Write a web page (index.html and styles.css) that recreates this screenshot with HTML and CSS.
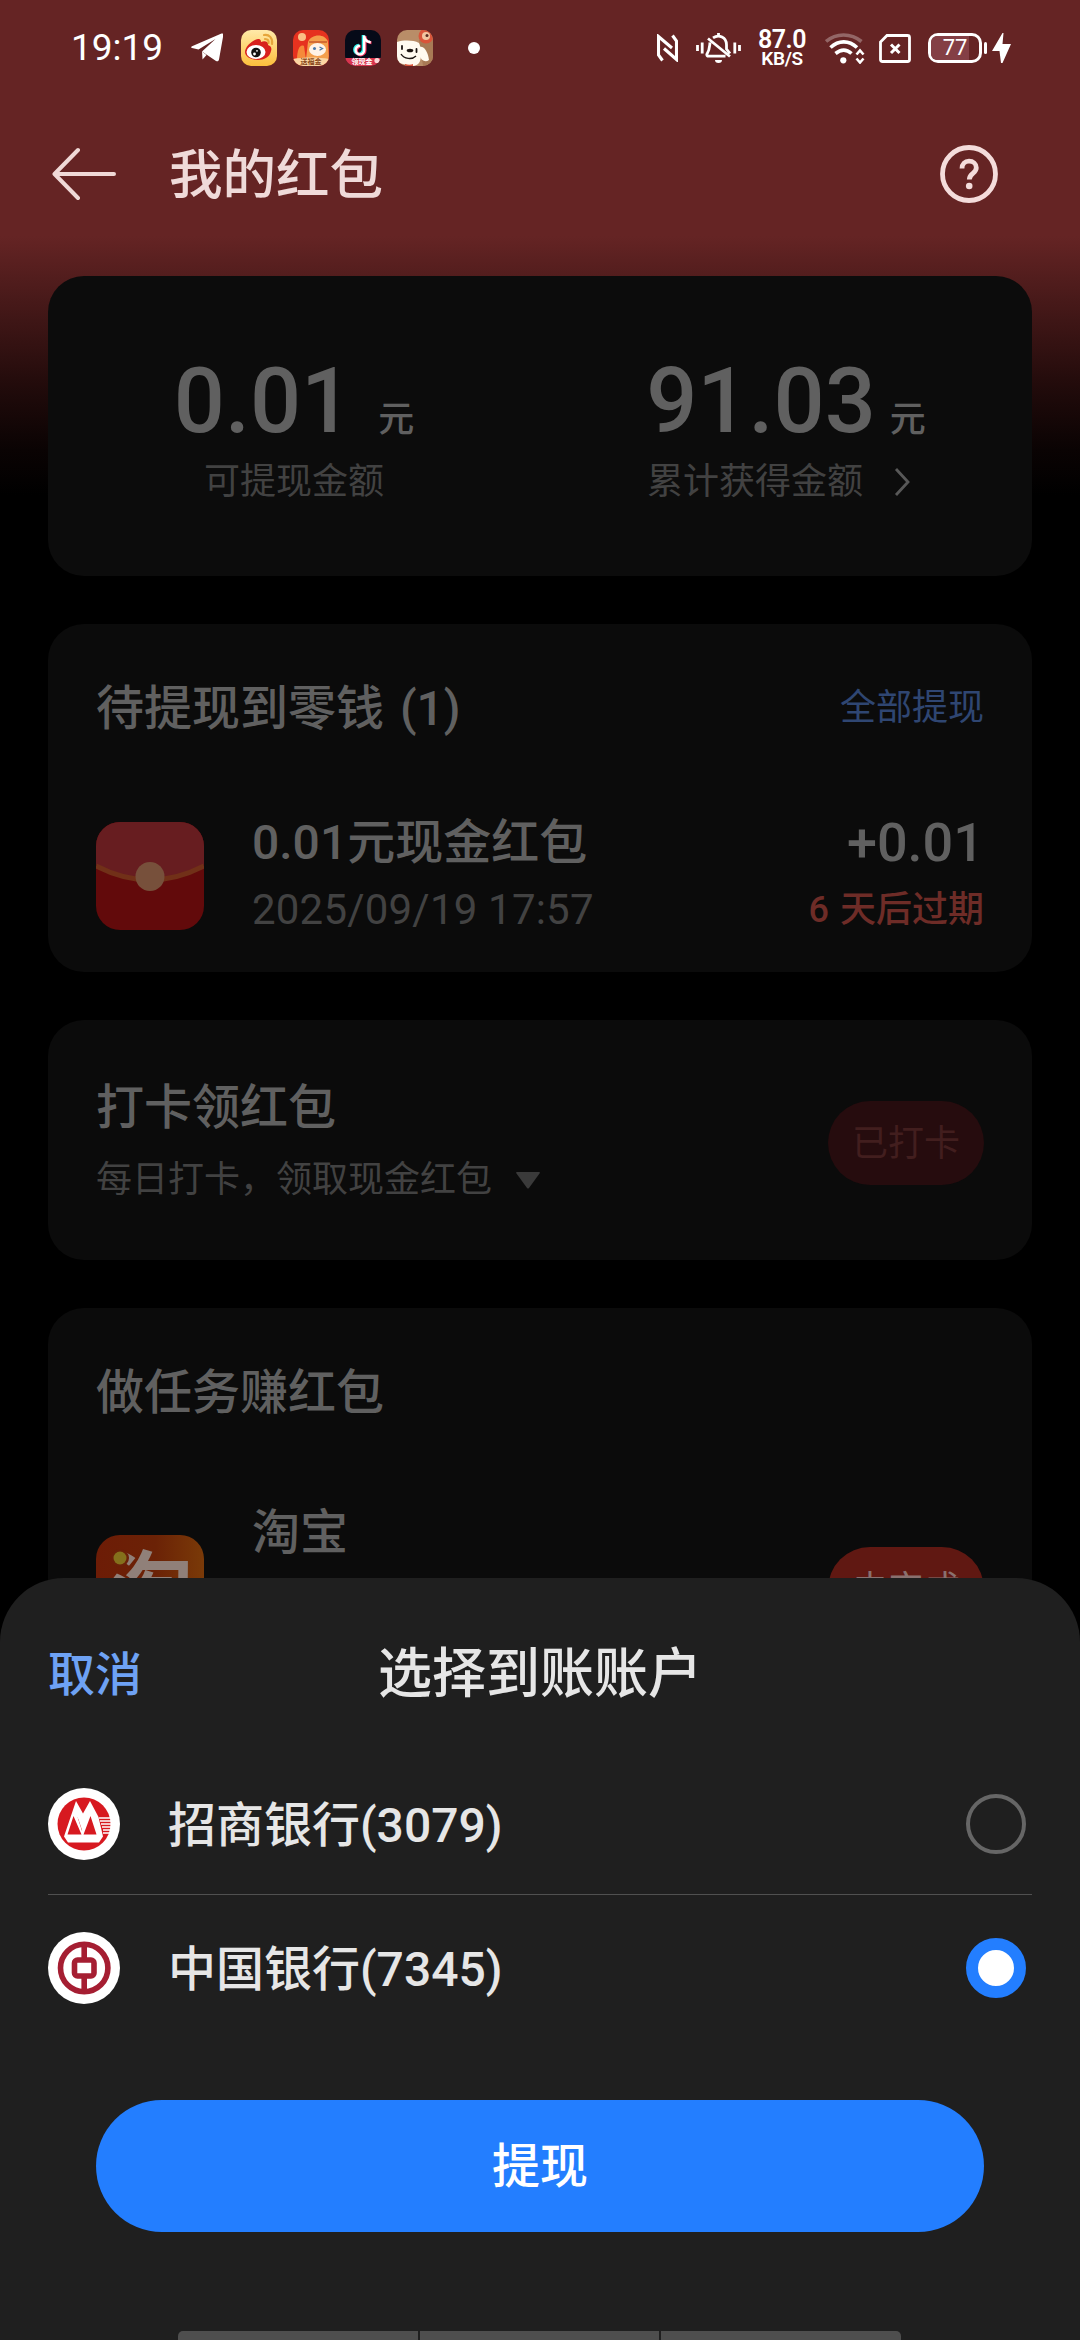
FILE: index.html
```html
<!DOCTYPE html>
<html lang="zh-CN">
<head>
<meta charset="utf-8">
<title>我的红包</title>
<link rel="stylesheet" href="styles.css">
</head>
<body>
<div class="screen">
  <div class="status">
    <span class="status-time">19:19</span>
    <svg class="tg" width="32" height="30" viewBox="0 0 32 30"><path d="M1 13.2 30.5.6c1.2-.5 2 .2 1.8 1.6L28 26.600c-.3 1.600-1.600 2.300-3 1.300L11 18.500 24.500 6 7.500 16.500 1 14.900c-1.100-.3-1.100-1.200 0-1.700Z" fill="#fff"/><path d="M11 18.500 15.500 22l-4 4.500Z" fill="#fff"/></svg>
    <div class="apps">
      <svg width="36" height="36" viewBox="0 0 36 36">
        <defs><linearGradient id="wb" x1="0" y1="0" x2="0" y2="1"><stop offset="0" stop-color="#ffe9a8"/><stop offset="1" stop-color="#fdbf3c"/></linearGradient></defs>
        <rect width="36" height="36" rx="10" fill="url(#wb)"/>
        <path d="M4 22c0-5 7-12 13-13 3 0 3 2 3 3 4-2 8 0 7 3 3 1 4 3 3 6-1 6-7 9-13 9S4 27 4 22Z" fill="#d8201d"/>
        <ellipse cx="15" cy="22" rx="9.500" ry="7" fill="#fff"/><circle cx="15" cy="22.500" r="4.800" fill="#111"/><circle cx="13.500" cy="24" r="1.400" fill="#fff"/><circle cx="16" cy="20.800" r=".9" fill="#fff"/>
        <path d="M23 5c5-1 9 3 8 9M24 9c3 0 4 2 3.500 4" fill="none" stroke="#e6a53a" stroke-width="2.200" stroke-linecap="round"/>
      </svg>
      <svg width="36" height="36" viewBox="0 0 36 36">
        <defs><clipPath id="rc"><rect width="36" height="36" rx="10"/></clipPath></defs>
        <g clip-path="url(#rc)">
          <rect width="36" height="36" fill="#e6321f"/>
          <circle cx="9" cy="7" r="4" fill="#fbbf86"/>
          <path d="M4 30c0-11 3-16 7-14l2 14Z" fill="#f58a3a"/>
          <path d="M15 12c3-8 17-9 20 0l1 17H13Z" fill="#f4a04c"/>
          <path d="M16 12h18" stroke="#c95a2b" stroke-width="1.500"/>
          <ellipse cx="24.500" cy="19.500" rx="8.500" ry="6.500" fill="#fff3e6"/>
          <circle cx="21.500" cy="18.500" r="1.500" fill="#4b79a8"/><path d="m26.500 17 3 1.500-3 1.800" fill="none" stroke="#4b79a8" stroke-width="1.300"/>
          <path d="M0 29c10-2 26-2 36 0v7H0Z" fill="#fbd6a3"/>
          <text x="18" y="34" class="micro micro-brown">送福金</text>
        </g>
      </svg>
      <svg width="36" height="36" viewBox="0 0 36 36">
        <g clip-path="url(#rc)">
          <rect width="36" height="36" fill="#060a18"/>
          <g fill="none" stroke-width="3"><path d="M18.200 5v14.500a4.300 4.300 0 1 1-4.300-4.200M18.200 6c.8 3.500 3 5.500 6.500 5.800" stroke="#2ff0ea"/><path d="M20 6v14.500a4.300 4.300 0 1 1-4.300-4.200M20 7c.8 3.500 3 5.500 6.500 5.800" stroke="#f5345f"/><path d="M19.200 5.500V20a4.300 4.300 0 1 1-4.300-4.200M19.200 6.500c.8 3.500 3 5.500 6.500 5.800" stroke="#fff" stroke-width="2.400"/></g>
          <path d="M0 28h36v3l-6 5H0Z" fill="#d8354e"/>
          <text x="17" y="34" class="micro">领现金</text>
          <circle cx="32" cy="30.500" r="2.600" fill="#fbd8d8"/>
        </g>
      </svg>
      <svg width="36" height="36" viewBox="0 0 36 36">
        <g clip-path="url(#rc)">
          <rect width="36" height="36" fill="#b98d68"/>
          <path d="M22 10 36 8v28H26Z" fill="#a87a55"/>
          <path d="M0 12c7-2 16-2 22 1 2 4 3 12 1 18-1 3-4 5-9 5L2 33 0 30Z" fill="#fffaf0"/>
          <path d="M22 17c5-2 9 5 10 13-4 3-8 0-9-4Z" fill="#fffaf0"/>
          <circle cx="29" cy="6" r="7.500" fill="#d9543a"/><circle cx="29" cy="6" r="4" fill="#f2c5a0"/><circle cx="30" cy="5.500" r="1.500" fill="#5a2a20"/>
          <ellipse cx="13" cy="20.500" rx="3.300" ry="1.800" fill="#1c1512"/><path d="M5 16v3M19.500 19v3" stroke="#1c1512" stroke-width="1.800" stroke-linecap="round"/><path d="M4 24c3 5 11 6 15 2" fill="none" stroke="#1c1512" stroke-width="1.400"/>
          <path d="M8 34c3 1 6 1 8 0v2H8Z" fill="#d9543a"/>
        </g>
      </svg>
    </div>
    <span class="more-dot"></span>
    <div class="status-right">
      <svg class="nfc" width="21" height="28" viewBox="0 0 21 28"><path d="M5.500 26.500 1.500 21V2.500L15 14M15.500 1.500 19.500 7v18.500L7 14.500" fill="none" stroke="#fff" stroke-width="3.100"/></svg>
      <svg class="bell" width="45" height="30" viewBox="0 0 45 30"><g fill="none" stroke="#fff" stroke-width="2.800"><path d="M1.500 12v6M6.200 9.500v11M38.800 9.500v11M43.500 12v6"/><path d="M17 4.800c6-4 13.500-.5 13.500 7V16l3.500 4.500M14 9.500c-.5 4 0 6.500-3.200 12 0 1 .5 1.700 1.700 1.700h17M22.500 0v3M12 5.500l22 18"/></g><path d="M19 27h7a3.500 3 0 0 1-7 0Z" fill="#fff"/></svg>
      <div class="speed"><b>87.0</b><span>KB/S</span></div>
      <svg class="wifi" width="40" height="31" viewBox="0 0 40 31"><g fill="none" stroke="#fff" stroke-width="3.600"><path d="M1 8.500C11-.2 26-.2 36.500 8.500" opacity=".3"/><path d="M5.500 14.500c8-7.500 18.500-7.500 26.500 0M10.500 20.500c5.500-4.500 11-4.500 16 0"/><path d="m31.500 21.500 3.500-4 3.500 4M31.500 25.500l3.500 4 3.500-4" stroke-width="2.600"/></g><circle cx="18.300" cy="27.300" r="3.100" fill="#fff"/></svg>
      <svg class="sim" width="32" height="29" viewBox="0 0 32 29"><path d="M8 1.500h20.500q2 0 2 2v22q0 2-2 2h-25q-2 0-2-2V8Z" fill="none" stroke="#fff" stroke-width="2.800"/><path d="m12 10.500 8.500 8.500m0-8.500L12 19" stroke="#fff" stroke-width="3"/></svg>
      <div class="battery"><span class="battery-level"></span><span class="battery-text">77</span><i></i></div>
      <svg width="19" height="30" viewBox="0 0 19 30"><path d="M10.500 0 0 18h7.500l1.500 12h1.500L19 11h-8.500l1-11Z" fill="#fff"/></svg>
    </div>
  </div>

  <header class="appbar">
    <svg width="64" height="54" viewBox="0 0 64 54"><path d="M26 3 2.500 27 26 51M3 27h59" fill="none" stroke="#f0d9d7" stroke-width="4" stroke-linecap="round" stroke-linejoin="round"/></svg>
    <h1>我的红包</h1>
    <svg class="help" width="58" height="58" viewBox="0 0 58 58"><circle cx="29" cy="29" r="26.500" fill="none" stroke="#f4dcdb" stroke-width="4.800"/><path d="M22 23.500c0-4.500 3-7.300 7-7.300s7.300 2.600 7.300 6.600c0 5.700-7 5.400-7 11.600" fill="none" stroke="#f4dcdb" stroke-width="4.800"/><circle cx="29.200" cy="41" r="3.300" fill="#f4dcdb"/></svg>
  </header>

  <main class="cards">
    <section class="card totals">
      <div class="total total-left">
        <div class="total-value"><strong>0.01</strong><span>元</span></div>
        <div class="total-label">可提现金额</div>
      </div>
      <div class="total">
        <div class="total-value"><strong>91.03</strong><span>元</span></div>
        <div class="total-label">累计获得金额<svg width="16" height="30" viewBox="0 0 16 30"><path d="m2 2 12 13L2 28" fill="none" stroke="#585858" stroke-width="2.800"/></svg></div>
      </div>
    </section>

    <section class="card pending">
      <div class="card-head"><h2>待提现到零钱 (1)</h2><a class="link">全部提现</a></div>
      <div class="packet">
        <svg width="108" height="108" viewBox="0 0 108 108">
          <defs><clipPath id="pk"><rect width="108" height="108" rx="24"/></clipPath></defs>
          <g clip-path="url(#pk)"><rect width="108" height="108" fill="#620a0b"/><path d="M0 0h108v43Q54 72 0 43Z" fill="#671d20"/><path d="M0 44Q54 72 108 44" fill="none" stroke="#713018" stroke-width="5"/></g>
          <circle cx="54" cy="54.500" r="14.500" fill="#77503b"/>
        </svg>
        <div class="packet-text"><h3>0.01元现金红包</h3><p>2025/09/19 17:57</p></div>
        <div class="packet-side"><strong>+0.01</strong><em>6 天后过期</em></div>
      </div>
    </section>

    <section class="card checkin">
      <div class="checkin-text">
        <h2>打卡领红包</h2>
        <p>每日打卡，领取现金红包<svg width="24" height="17" viewBox="0 0 24 17"><path d="M1 0h22q1.500 0 .5 1.500L13 16q-1 1.200-2 0L.5 1.500Q-.5 0 1 0Z" fill="#3a3a3a"/></svg></p>
      </div>
      <span class="pill pill-done">已打卡</span>
    </section>

    <section class="card tasks">
      <div class="card-head"><h2>做任务赚红包</h2></div>
      <div class="task">
        <svg class="task-icon" width="108" height="108" viewBox="0 0 108 108">
          <defs><linearGradient id="tb" x1="0" y1="0" x2="1" y2="0"><stop offset="0" stop-color="#6d1c06"/><stop offset=".55" stop-color="#6b2206"/><stop offset="1" stop-color="#7a3a08"/></linearGradient></defs>
          <rect width="108" height="108" rx="24" fill="url(#tb)"/>
          <text x="55" y="86" class="tao">淘</text>
          <circle cx="24" cy="23" r="9" fill="#6b2008"/><circle cx="24" cy="23" r="6.500" fill="#84701c"/>
        </svg>
        <h3>淘宝</h3>
        <span class="pill pill-go">去完成</span>
      </div>
    </section>
  </main>

  <section class="sheet">
    <div class="sheet-head"><a>取消</a><h2>选择到账账户</h2><span></span></div>
    <div class="bank bank-first">
      <svg width="72" height="72" viewBox="0 0 72 72">
        <circle cx="36" cy="36" r="36" fill="#fff"/><circle cx="36" cy="36" r="26.500" fill="#d71920"/>
        <path d="M16 48.500 28 13l7 12.500L42 13l8.500 16 4.500 19.500-4 6H20Z" fill="#fff"/>
        <path d="m19.500 46.500 6-18.500L33.500 46.500ZM35.500 46.500 42.500 28l6 18.500ZM29.500 29l4.500 14 5-14-4.500 8Z" fill="#d71920"/>
        <path d="m28 24 6.500 19.500L42 24l-7.500 8Z" fill="#fff"/>
        <path d="M51 30h13M52 33h12M53 36h11M54 39h10M55 42h9M55 45h7" stroke="#fff" stroke-width="1.400"/>
      </svg>
      <span class="bank-name">招商银行(3079)</span><i class="radio"></i>
    </div>
    <div class="bank">
      <svg width="72" height="72" viewBox="0 0 72 72">
        <circle cx="36" cy="36" r="36" fill="#fff"/>
        <g fill="none" stroke="#a51e32" stroke-width="5.600"><circle cx="36.200" cy="36" r="23.700"/><rect x="26.500" y="28" width="19.500" height="16" rx="3"/><path d="M36.200 12v15M36.200 45v15"/></g>
      </svg>
      <span class="bank-name">中国银行(7345)</span><i class="radio radio-on"></i>
    </div>
    <button class="submit">提现</button>
    <div class="navbar"><i></i><i></i><i></i></div>
  </section>
</div>
</body>
</html>
```
FILE: styles.css
```css
* { box-sizing: border-box; margin: 0; padding: 0; }
body { background: #000; font-family: Roboto, "Noto Sans CJK SC", sans-serif; line-height: 1.2; }
svg { display: block; flex: none; }
h1, h2, h3, strong { font-weight: 500; }
i, em { font-style: normal; }

.screen {
  position: relative;
  width: 1080px;
  height: 2340px;
  overflow: hidden;
  background: linear-gradient(#652424 0, #652424 236px, #3f1616 320px, #220b0b 385px, #0a0303 450px, #000 495px);
}

/* status bar */
.status { display: flex; align-items: center; height: 96px; padding: 0 69px 0 71px; color: #fff; }
.status-time { width: 120px; font-size: 37px; }
.apps { display: flex; gap: 16px; margin-left: 18px; }
.more-dot { width: 12px; height: 12px; margin-left: 35px; border-radius: 50%; background: #fff; }
.status-right { display: flex; align-items: center; margin-left: auto; }
.bell { margin-left: 18px; }
.speed { display: flex; flex-direction: column; align-items: center; width: 50px; margin-left: 16px; }
.speed b { font-size: 25px; line-height: 21px; font-weight: 600; letter-spacing: -.5px; }
.speed span { font-size: 19px; line-height: 18px; font-weight: 600; letter-spacing: -.4px; }
.wifi { margin-left: 18px; }
.sim { margin-left: 14px; }
.battery {
  display: grid; place-items: center; position: relative;
  width: 54px; height: 30px; margin: 0 10px 0 17px;
  border: 3px solid #fff; border-radius: 10px;
}
.battery-level { grid-area: 1 / 1; justify-self: start; width: 38px; height: 24px; border-radius: 6px 0 0 6px; background: #843f45; }
.battery-text { grid-area: 1 / 1; font-size: 22px; line-height: 24px; font-weight: 400; }
.battery i { position: absolute; left: 53px; top: 6px; width: 3px; height: 12px; border-radius: 2px; background: #fff; }
.micro { font: 700 7px "Noto Sans CJK SC", sans-serif; text-anchor: middle; fill: #fff; }
.micro-brown { fill: #8a4a1c; }

/* title bar */
.appbar { display: flex; align-items: center; height: 156px; padding: 0 82px 0 52px; }
.appbar h1 { margin-left: 53px; padding-top: 3px; font-size: 53.5px; line-height: 60px; color: #efdad9; }
.help { margin-left: auto; }

/* cards */
.cards { display: flex; flex-direction: column; gap: 48px; padding: 24px 48px 0; }
.card { border-radius: 36px; background: #0b0b0b; color: #606060; }
.card h2, .card h3 { font-size: 48px; }
.card-head { display: flex; align-items: center; justify-content: space-between; height: 166px; padding: 3px 48px 0; }
.card-head h2 { word-spacing: 4px; }
.link { font-size: 36px; color: #2f4672; }

.totals { display: grid; grid-template-columns: 1fr 1fr; height: 300px; padding-top: 81px; background: #0c0c0c; }
.total-value { display: flex; align-items: baseline; justify-content: center; line-height: 90px; }
.total-value strong { font-size: 90px; }
.total-value span { margin-left: 14px; padding-top: 2px; font-size: 36px; font-weight: 500; line-height: 36px; }
.total-left .total-value span { margin-left: 26px; }
.total-label { display: flex; align-items: center; justify-content: center; margin-top: 5px; font-size: 36px; line-height: 60px; color: #424242; }
.total-label svg { margin: 0 15px 0 31px; }

.pending { height: 348px; }
.packet { display: flex; align-items: center; height: 172px; padding: 6px 48px 0; }
.packet svg { margin-top: -6px; }
.packet-text { margin-left: 48px; }
.packet h3, .packet strong { line-height: 62px; }
.packet p, .packet em { line-height: 72px; }
.packet-text p { font-size: 42px; letter-spacing: .2px; color: #424242; }
.packet-side { display: flex; flex-direction: column; align-items: flex-end; margin-left: auto; }
.packet-side strong { font-size: 54px; }
.packet-side em { font-size: 36px; font-weight: 500; word-spacing: 2px; color: #6e2c27; }

.checkin { display: flex; justify-content: space-between; align-items: flex-start; height: 240px; padding: 54px 48px 0; }
.checkin h2 { line-height: 68px; }
.checkin p { display: flex; align-items: center; font-size: 36px; line-height: 77px; color: #424242; }
.checkin p svg { margin-left: 24px; }
.pill { width: 156px; height: 84px; border-radius: 42px; font-size: 36px; line-height: 86px; text-align: center; }
.pill-done { margin-top: 27px; background: #260c0e; color: #421e1e; }
.pill-go { margin: 47px 0 0 auto; background: #601812; color: #89716f; }

.tasks { height: 420px; }
.task { display: flex; align-items: flex-start; padding: 26px 48px 0; }
.task-icon { margin-top: 35px; }
.task h3 { margin-left: 48px; line-height: 66px; }
.tao { font: 700 84px "Noto Sans CJK SC", sans-serif; text-anchor: middle; fill: #908079; }

/* account sheet */
.sheet {
  position: absolute; left: 0; right: 0; top: 1578px; bottom: 0;
  display: flex; flex-direction: column;
  padding: 0 48px;
  border-radius: 64px 64px 0 0;
  background: #1f1f1f;
  color: #e6e6e6;
}
.sheet-head { display: grid; grid-template-columns: 1fr auto 1fr; align-items: center; height: 174px; padding-top: 20px; }
.sheet-head a { font-size: 47px; font-weight: 500; color: #6ea2f4; }
.sheet-head h2 { font-size: 54px; }
.bank { display: flex; align-items: center; height: 146px; padding-right: 6px; }
.bank-first { height: 143px; padding-top: 2px; border-bottom: 1px solid #505050; }
.bank-name { margin-left: 48px; padding-top: 3px; font-size: 48px; font-weight: 500; }
.radio { width: 60px; height: 60px; margin-left: auto; border: 4px solid #666; border-radius: 50%; }
.radio-on { border: 12px solid #237eff; background: #fff; }
.submit {
  height: 132px; margin: 59px 48px 0; padding-top: 2px;
  border: 0; border-radius: 66px;
  background: #237eff; color: #fff;
  font: 500 48px/1.2 Roboto, "Noto Sans CJK SC", sans-serif;
}
.navbar { display: flex; gap: 2px; width: 723px; height: 9px; margin: auto 0 0 130px; }
.navbar i { flex: 1; background: #4e4e4e; }
.navbar i:first-child { border-radius: 5px 0 0 0; }
.navbar i:last-child { border-radius: 0 5px 0 0; }
```
